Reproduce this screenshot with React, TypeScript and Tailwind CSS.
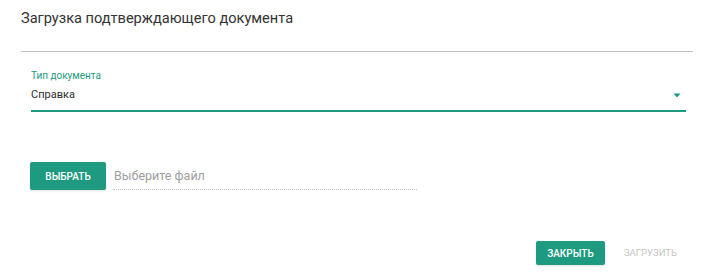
export default function App() {
  return (
    <div className="w-[722px] h-[280px] bg-white font-['Roboto',sans-serif] flex flex-col">
      <h1 className="pl-[21px] pt-[8px] text-[14.6px] leading-[20px] text-[#333333] font-normal">
        Загрузка подтверждающего документа
      </h1>
      <div className="mx-[21px] mt-[23px] w-[672px] h-px bg-[#c2c2c2]" />

      <div className="ml-[31px] mt-[18px] w-[655px]">
        <div className="text-[10px] leading-[12px] text-[#1e9a80]">Тип документа</div>
        <div className="flex items-center justify-between mt-[4px] h-[18px]">
          <span className="text-[11px] leading-[18px] text-[#2a2a2a]">Справка</span>
          <svg width="8" height="5" viewBox="0 0 8 5" className="mr-[5px]">
            <path d="M0.5 0.5 L7.5 0.5 L4 4.5 Z" fill="#1e9a80" />
          </svg>
        </div>
        <div className="mt-[6px] h-[2px] bg-[#1e9a80]" />
      </div>

      <div className="flex items-center ml-[30px] mt-[50px] gap-[7px]">
        <button className="w-[76px] h-[28px] rounded-[2px] bg-[#1e9a80] text-white text-[10px] font-medium shadow-sm">
          ВЫБРАТЬ
        </button>
        <div className="w-[304px] h-[28px] flex flex-col justify-end">
          <span className="pl-px text-[12.5px] leading-[18px] text-[#9e9e9e]">Выберите файл</span>
          <div className="mt-[4px] border-b border-dotted border-[#c8c8c8]" />
        </div>
      </div>

      <div className="flex items-center justify-end mt-[51px] pr-[45px] gap-[19px]">
        <button className="w-[69px] h-[24px] rounded-[2px] bg-[#1e9a80] text-white text-[10px] font-medium shadow-sm">
          ЗАКРЫТЬ
        </button>
        <span className="text-[9.5px] font-normal text-[#c4c4c4]">ЗАГРУЗИТЬ</span>
      </div>
    </div>
  );
}
